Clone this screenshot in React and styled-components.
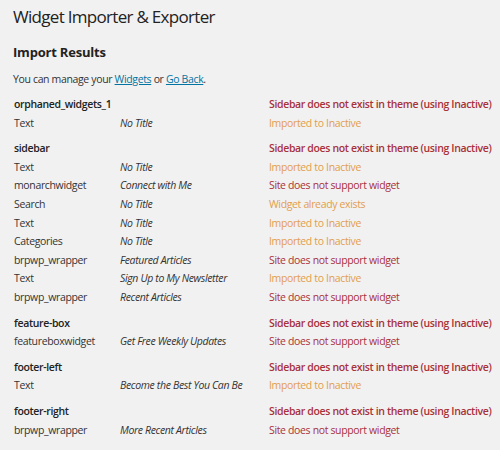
import React from 'react';
import styled, { createGlobalStyle } from 'styled-components';

const GlobalStyle = createGlobalStyle`
  html, body {
    margin: 0;
    padding: 0;
    background: #f1f1f1;
  }
  body {
    font-family: "Open Sans", "Liberation Sans", sans-serif;
    color: #333;
  }
`;

const results = [
  {
    sidebar: 'orphaned_widgets_1',
    message: 'Sidebar does not exist in theme (using Inactive)',
    widgets: [
      { name: 'Text', title: 'No Title', message: 'Imported to Inactive', status: 'warn' },
    ],
  },
  {
    sidebar: 'sidebar',
    message: 'Sidebar does not exist in theme (using Inactive)',
    widgets: [
      { name: 'Text', title: 'No Title', message: 'Imported to Inactive', status: 'warn' },
      { name: 'monarchwidget', title: 'Connect with Me', message: 'Site does not support widget', status: 'error' },
      { name: 'Search', title: 'No Title', message: 'Widget already exists', status: 'warn' },
      { name: 'Text', title: 'No Title', message: 'Imported to Inactive', status: 'warn' },
      { name: 'Categories', title: 'No Title', message: 'Imported to Inactive', status: 'warn' },
      { name: 'brpwp_wrapper', title: 'Featured Articles', message: 'Site does not support widget', status: 'error' },
      { name: 'Text', title: 'Sign Up to My Newsletter', message: 'Imported to Inactive', status: 'warn' },
      { name: 'brpwp_wrapper', title: 'Recent Articles', message: 'Site does not support widget', status: 'error' },
    ],
  },
  {
    sidebar: 'feature-box',
    message: 'Sidebar does not exist in theme (using Inactive)',
    widgets: [
      { name: 'featureboxwidget', title: 'Get Free Weekly Updates', message: 'Site does not support widget', status: 'error' },
    ],
  },
  {
    sidebar: 'footer-left',
    message: 'Sidebar does not exist in theme (using Inactive)',
    widgets: [
      { name: 'Text', title: 'Become the Best You Can Be', message: 'Imported to Inactive', status: 'warn' },
    ],
  },
  {
    sidebar: 'footer-right',
    message: 'Sidebar does not exist in theme (using Inactive)',
    widgets: [
      { name: 'brpwp_wrapper', title: 'More Recent Articles', message: 'Site does not support widget', status: 'error' },
    ],
  },
];

const colors = {
  error: '#a8323a',
  warn: '#e39d4d',
};

const Wrap = styled.div`
  padding: 4px 10px 0 13px;
`;

const Title = styled.h2`
  margin: 0;
  font-size: 17px;
  font-weight: 400;
  letter-spacing: -0.7px;
  line-height: 26px;
  color: #222;
`;

const Heading = styled.h3`
  margin: 12px 0 0;
  font-size: 13px;
  font-weight: 700;
  letter-spacing: -0.2px;
  line-height: 20px;
  color: #222;
`;

const Intro = styled.p`
  margin: 9px 0 0;
  font-size: 10.5px;
  letter-spacing: -0.35px;
  line-height: 16px;
  color: #333;
`;

const Link = styled.a`
  color: #0074a2;
  text-decoration: underline;
`;

const Table = styled.div`
  margin-top: 8px;
  display: flex;
  flex-direction: column;
  gap: 7px;
`;

const Group = styled.div`
  display: flex;
  flex-direction: column;
`;

const Row = styled.div`
  display: grid;
  grid-template-columns: 106px 149px 1fr;
  font-size: 10.5px;
  letter-spacing: -0.35px;
  line-height: 18.6px;
  padding-left: 1px;
  white-space: nowrap;
`;

const Name = styled.span`
  color: ${(p) => (p.$sidebar ? '#222' : '#333')};
  font-weight: ${(p) => (p.$sidebar ? 600 : 400)};
`;

const WidgetTitle = styled.span`
  font-style: italic;
  color: #333;
`;

const Message = styled.span`
  color: ${(p) => colors[p.$status]};
  font-weight: ${(p) => (p.$sidebar ? 600 : 400)};
`;

export default function App() {
  return (
    <>
      <GlobalStyle />
      <Wrap>
        <Title>Widget Importer &amp; Exporter</Title>
        <Heading>Import Results</Heading>
        <Intro>
          You can manage your <Link href="#">Widgets</Link> or <Link href="#">Go Back</Link>.
        </Intro>
        <Table>
          {results.map((group, i) => (
            <Group key={i}>
              <Row>
                <Name $sidebar>{group.sidebar}</Name>
                <span />
                <Message $status="error" $sidebar>{group.message}</Message>
              </Row>
              {group.widgets.map((w, j) => (
                <Row key={j}>
                  <Name>{w.name}</Name>
                  <WidgetTitle>{w.title}</WidgetTitle>
                  <Message $status={w.status}>{w.message}</Message>
                </Row>
              ))}
            </Group>
          ))}
        </Table>
      </Wrap>
    </>
  );
}
